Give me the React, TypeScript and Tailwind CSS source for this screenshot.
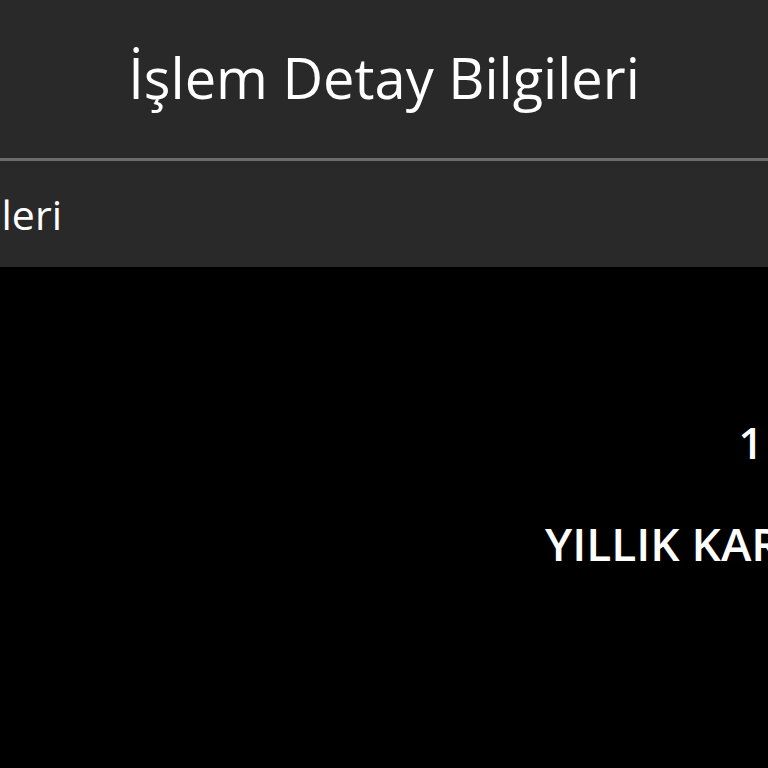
export default function App() {
    return (
        <div className="w-[768px] h-[768px] overflow-hidden bg-black font-['Open_Sans',sans-serif] text-white">
            <div className="h-[158px] bg-[#292929] flex items-center justify-center">
                <h1 className="text-[56px] leading-none whitespace-nowrap pb-[4px]">İşlem Detay Bilgileri</h1>
            </div>
            <div className="h-[3px] bg-[#6b6b6b]" />
            <div className="h-[106px] bg-[#292929] flex items-center">
                <div className="w-[62px] flex justify-end whitespace-nowrap">
                    <span className="text-[41px] leading-none">Detay Bilgileri</span>
                </div>
            </div>
            <div className="flex flex-col pt-[154px]">
                <div className="flex justify-end pr-[5px]">
                    <span className="text-[43px] font-semibold leading-none">1</span>
                </div>
                <div className="pl-[545px] pt-[56px] whitespace-nowrap">
                    <span className="text-[46px] font-semibold leading-none">YILLIK KART ÜCRETİ</span>
                </div>
            </div>
        </div>
    );
}
